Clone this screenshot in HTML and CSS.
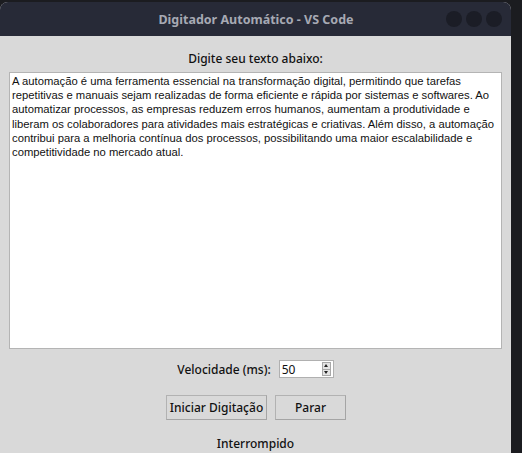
FILE: index.html
```html
<!DOCTYPE html>
<html lang="pt">
<head>
<meta charset="utf-8">
<link rel="stylesheet" href="styles.css">
</head>
<body>
<div class="window">
  <div class="titlebar">
    <span class="title">Digitador Automático - VS Code</span>
    <div class="dots"><span class="dot"></span><span class="dot"></span><span class="dot"></span></div>
  </div>
  <div class="content">
    <div class="heading">Digite seu texto abaixo:</div>
    <div class="textbox">A automação é uma ferramenta essencial na transformação digital, permitindo que tarefas<br>repetitivas e manuais sejam realizadas de forma eficiente e rápida por sistemas e softwares. Ao<br>automatizar processos, as empresas reduzem erros humanos, aumentam a produtividade e<br>liberam os colaboradores para atividades mais estratégicas e criativas. Além disso, a automação<br>contribui para a melhoria contínua dos processos, possibilitando uma maior escalabilidade e<br>competitividade no mercado atual.</div>
    <div class="speed-row">
      <span class="label">Velocidade (ms):</span>
      <div class="spinbox">
        <span class="spin-value">50</span>
        <div class="spin-arrows">
          <span class="arrow up"></span>
          <span class="arrow down"></span>
        </div>
      </div>
    </div>
    <div class="buttons">
      <button class="btn btn-start">Iniciar Digitação</button>
      <button class="btn btn-stop">Parar</button>
    </div>
    <div class="status">Interrompido</div>
  </div>
</div>
</body>
</html>
```

FILE: styles.css
```css
html, body {
  margin: 0;
  padding: 0;
  background: #1b1c20;
  height: 453px;
  overflow: hidden;
}
.window {
  margin-top: 2px;
  width: 511px;
  height: 460px;
  background: #d9d9d9;
  border-radius: 8px 8px 0 0;
  overflow: hidden;
  display: flex;
  flex-direction: column;
}
.titlebar {
  height: 34px;
  background: #272a37;
  position: relative;
  display: flex;
  align-items: center;
  justify-content: center;
  flex-shrink: 0;
}
.title {
  font-family: "Noto Sans", sans-serif;
  font-weight: 700;
  font-size: 12.5px;
  color: #a6a9b3;
  margin-left: 1px;
}
.dots {
  position: absolute;
  right: 9px;
  top: 9px;
  display: flex;
  gap: 4px;
}
.dot {
  width: 16px;
  height: 16px;
  border-radius: 50%;
  background: #1b1d26;
}
.content {
  display: flex;
  flex-direction: column;
  align-items: center;
  padding: 0 9px;
}
.heading {
  font-family: "Noto Sans", sans-serif;
  font-weight: 500;
  font-size: 12px;
  color: #111;
  margin-top: 14px;
  height: 17px;
  line-height: 17px;
}
.textbox {
  margin-top: 5px;
  box-sizing: border-box;
  width: 493px;
  height: 277px;
  background: #fff;
  border: 1px solid #b4b4b4;
  padding: 1px 2px;
  font-family: "Liberation Sans", Arial, sans-serif;
  font-size: 11.25px;
  line-height: 14.2px;
  color: #111;
  white-space: nowrap;
  overflow: hidden;
  align-self: flex-start;
}
.speed-row {
  margin-top: 11px;
  display: flex;
  align-items: center;
  gap: 8px;
  margin-left: 0;
}
.label {
  font-family: "Noto Sans", sans-serif;
  font-weight: 500;
  font-size: 12px;
  color: #111;
}
.spinbox {
  width: 55px;
  height: 18px;
  box-sizing: border-box;
  background: #fff;
  border: 1px solid #b0b0b0;
  display: flex;
  align-items: center;
  justify-content: space-between;
  padding-left: 2px;
}
.spin-value {
  font-family: "Noto Sans", sans-serif;
  font-size: 12px;
  color: #111;
}
.spin-arrows {
  width: 9px;
  height: 14px;
  margin-right: 2px;
  display: flex;
  flex-direction: column;
  border: 1px solid #a8a8a8;
  box-sizing: border-box;
  background: #e4e4e4;
}
.arrow {
  flex: 1;
  display: flex;
  align-items: center;
  justify-content: center;
}
.arrow.up::before {
  content: "";
  border-left: 2px solid transparent;
  border-right: 2px solid transparent;
  border-bottom: 3px solid #222;
}
.arrow.down {
  border-top: 1px solid #a8a8a8;
}
.arrow.down::before {
  content: "";
  border-left: 2px solid transparent;
  border-right: 2px solid transparent;
  border-top: 3px solid #222;
}
.buttons {
  margin-top: 17px;
  display: flex;
  gap: 8px;
  margin-left: 1px;
}
.btn {
  font-family: "Noto Sans", sans-serif;
  font-weight: 500;
  font-size: 12px;
  color: #111;
  background: #d9d9d9;
  border: 1px solid #b2b2b2;
  border-right-color: #a5a5a5;
  border-bottom-color: #a5a5a5;
  height: 25px;
  padding: 0;
  margin: 0;
}
.btn-start {
  width: 101px;
}
.btn-stop {
  width: 71px;
}
.status {
  margin-top: 15px;
  font-family: "Noto Sans", sans-serif;
  font-weight: 500;
  font-size: 12px;
  color: #111;
}
```
